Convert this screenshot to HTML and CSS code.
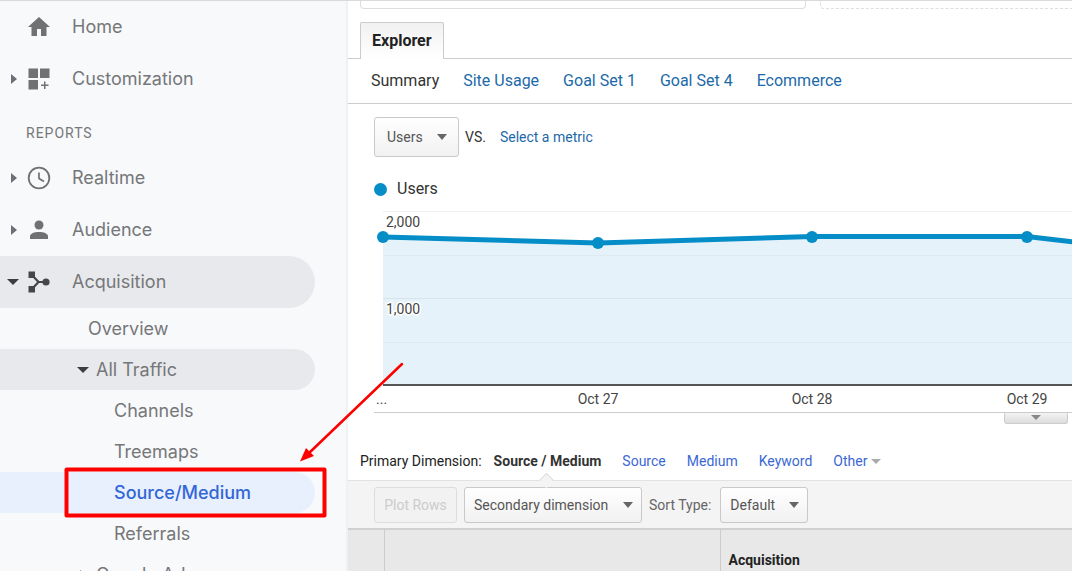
FILE: index.html
```
<!DOCTYPE html>
<html lang="en">
<head>
<meta charset="utf-8">
<title>Source/Medium - Analytics</title>
<link rel="stylesheet" href="styles.css">
</head>
<body>
<nav class="sidebar" aria-label="Reports">
  <a class="row" href="#"><span class="caret"></span>
    <svg class="icon" viewBox="0 0 24 24"><path d="M10 21v-7h4v7h5.500v-9H23L12 2 1 12h3.500v9z"/></svg>Home</a>
  <a class="row" href="#"><span class="caret caret-right"></span>
    <svg class="icon" viewBox="0 0 24 24"><path d="M1.500 1.500h9.500v9.500H1.500zM13 1.500h9.500v9.500H13zM1.500 13h9.500v9.500H1.500zM17 14.500h1.500v3h3V19h-3v3H17v-3h-3v-1.500h3z"/></svg>Customization</a>
  <h2 class="section">REPORTS</h2>
  <a class="row" href="#"><span class="caret caret-right"></span>
    <svg class="icon" viewBox="0 0 24 24"><circle cx="12" cy="12" r="10.300" fill="none" stroke="currentColor" stroke-width="1.800"/><path d="M12 6.500v6l5 3" fill="none" stroke="currentColor" stroke-width="1.700"/></svg>Realtime</a>
  <a class="row" href="#"><span class="caret caret-right"></span>
    <svg class="icon" viewBox="0 0 24 24"><circle cx="12" cy="7" r="4.500"/><path d="M3 21v-2.500c0-3.300 4.500-4.500 9-4.500s9 1.200 9 4.500V21z"/></svg>Audience</a>
  <a class="row row-open" href="#"><span class="caret caret-down"></span>
    <svg class="icon" viewBox="0 0 24 24"><path d="M4.500 4.500l7 7.500-7 7.500M11.500 12H19" fill="none" stroke="currentColor" stroke-width="2.200"/><path d="M1.500 1.500H8V8H1.500zM1.500 16H8v6.500H1.500z"/><circle cx="19" cy="12" r="3.600"/></svg>Acquisition</a>
  <a class="sub sub-overview" href="#">Overview</a>
  <a class="sub sub-group sub-open" href="#"><span class="caret-down"></span>All Traffic</a>
  <a class="sub sub-leaf" href="#">Channels</a>
  <a class="sub sub-leaf" href="#">Treemaps</a>
  <a class="sub sub-leaf sub-current" href="#" aria-current="page">Source/Medium</a>
  <a class="sub sub-leaf" href="#">Referrals</a>
  <a class="sub sub-group" href="#"><span class="caret-right"></span>Google Ads</a>
</nav>

<main class="main">
  <div class="segments"><div class="segment"></div><div class="segment segment-empty"></div></div>
  <div class="tabs"><button class="tab" type="button">Explorer</button></div>
  <div class="views">
    <span class="view-current">Summary</span>
    <a href="#">Site Usage</a>
    <a href="#">Goal Set 1</a>
    <a href="#">Goal Set 4</a>
    <a href="#">Ecommerce</a>
  </div>
  <div class="metrics">
    <span class="picker picker-metric"><select aria-label="Metric"><option>Users</option></select></span>
    <span class="versus">VS.</span>
    <a href="#">Select a metric</a>
  </div>
  <div class="legend"><span class="dot"></span>Users</div>
  <div class="chart">
    <svg width="760" height="201" viewBox="0 0 760 201" role="img" aria-label="Users per day">
      <path class="area" d="M9 26L224 32 438 25.500H653L760 38V174H9z"/>
      <path class="grid" d="M9 .500H760M9 87.500H760"/>
      <path class="grid grid-minor" d="M9 44.500H760M9 131.500H760"/>
      <path class="axis" d="M9 174H760"/>
      <path class="line" d="M9 26L224 32 438 25.500H653L760 38"/>
      <circle class="point" cx="9" cy="26" r="6"/><circle class="point" cx="224" cy="32" r="6"/>
      <circle class="point" cx="438" cy="26" r="6"/><circle class="point" cx="653" cy="26" r="6"/>
      <text class="scale" x="12" y="16">2,000</text>
      <text class="scale" x="12" y="103">1,000</text>
      <text x="2" y="193">...</text>
      <text class="day" x="224" y="193">Oct 27</text>
      <text class="day" x="438" y="193">Oct 28</text>
      <text class="day" x="653" y="193">Oct 29</text>
    </svg>
  </div>
  <div class="handle-bar"><button class="handle" type="button" aria-label="Expand chart"></button></div>
  <div class="dimensions">
    <span class="dim-label">Primary Dimension:</span>
    <strong class="dim-current">Source / Medium</strong>
    <a href="#">Source</a>
    <a href="#">Medium</a>
    <a href="#">Keyword</a>
    <a class="dim-other" href="#">Other</a>
  </div>
  <div class="toolbar">
    <button class="plot" type="button" disabled>Plot Rows</button>
    <span class="picker picker-secondary"><select aria-label="Secondary dimension"><option>Secondary dimension</option></select></span>
    <label class="sort" for="sort">Sort Type:</label>
    <span class="picker picker-sort"><select id="sort"><option>Default</option></select></span>
  </div>
  <table class="report">
    <thead><tr><th class="col-check"></th><th class="col-dim"></th><th>Acquisition</th></tr></thead>
  </table>
</main>

<svg class="annotation" width="420" height="530" viewBox="0 0 420 530" aria-hidden="true">
  <rect x="66.500" y="469.500" width="258" height="46" fill="none" stroke="#fe0000" stroke-width="4" stroke-linejoin="round"/>
  <path d="M402 364L308 454" stroke="#fe0000" stroke-width="2.500" stroke-linecap="round"/>
  <path d="M300 461.500L306 448 310 452 314 456z" fill="#fe0000"/>
</svg>
</body>
</html>
```
FILE: styles.css
```
* { box-sizing: border-box; }

body {
  margin: 0;
  height: 100vh;
  display: flex;
  position: relative;
  overflow: hidden;
  border-top: 1px solid #d9dade;
  background: #fff;
  color: #333;
  font: 14px/20px Roboto, sans-serif;
}

a { color: #1c69a8; text-decoration: none; }

/* Sidebar */
.sidebar {
  flex: none;
  width: 348px;
  background: #f8f9fb;
  border-right: 2px solid #f0f1f2;
  font: 400 18px/24px Inter, sans-serif;
}
.sidebar a { color: #757779; }
.row {
  display: flex;
  align-items: center;
  height: 52px;
  margin-right: 31px;
}
.row-open { background: #e8e9ec; border-radius: 0 26px 26px 0; }
.icon {
  width: 24px;
  height: 24px;
  margin-right: 21px;
  fill: currentColor;
  color: #707172;
}
.row-open .icon { color: #444649; }
.caret { width: 27px; flex: none; }
.caret-right::before, .caret-down::before {
  content: "";
  display: block;
  width: 0;
  border: 5px solid transparent;
}
.caret-right::before { border-left: 6px solid #6d6f76; border-right: 0; }
.caret-down::before {
  border-top: 6px solid #3c3d42;
  border-bottom: 0;
  border-left-width: 6px;
  border-right-width: 6px;
}
.caret-right { padding-left: 11px; }
.caret.caret-down { padding-left: 7px; }
.section {
  margin: 0;
  padding: 18px 0 0 26px;
  height: 47px;
  color: #757779;
  font: 14px/20px Roboto, sans-serif;
  letter-spacing: 1px;
}
.sub {
  display: flex;
  align-items: center;
  height: 41px;
  margin-right: 31px;
  border-radius: 0 21px 21px 0;
}
.sub-overview { padding-left: 88px; }
.sub-group { padding-left: 77px; gap: 7px; }
.sub-group .caret-right { width: 12px; padding-left: 3px; }
.sub-open { background: #e8e9ec; }
.sub-leaf { padding-left: 114px; }
.sidebar .sub-current { background: #e8f0fe; color: #3367d6; font-weight: 500; }

/* Report */
.main { flex: 1; min-width: 0; overflow: hidden; }
.segments { display: flex; gap: 14px; height: 8px; padding-left: 12px; }
.segment {
  width: 446px;
  border: 1px solid #dedede;
  border-top: 0;
  border-radius: 0 0 4px 4px;
}
.segment-empty { flex: 1; border-style: dashed; border-right: 0; border-radius: 0 0 0 4px; }
.tabs {
  display: flex;
  margin-top: 13px;
  padding-left: 12px;
  border-bottom: 1px solid #ccc;
}
.tab {
  height: 37px;
  margin-bottom: -1px;
  padding: 0 11px;
  border: 1px solid #ccc;
  border-bottom: 0;
  border-radius: 2px 2px 0 0;
  background: linear-gradient(#f1f1f1, #fff);
  color: #222;
  font: 700 16px/20px Roboto, sans-serif;
}
.views {
  display: flex;
  align-items: center;
  gap: 24px;
  height: 45px;
  padding-left: 23px;
  border-bottom: 1px solid #ccc;
  font-size: 16px;
}
.metrics { display: flex; align-items: center; margin-top: 13px; padding-left: 26px; }
.versus { margin: 0 14px 0 6px; font-size: 14px; }
.picker { position: relative; display: inline-flex; }
.picker select {
  appearance: none;
  width: 100%;
  margin: 0;
  padding: 0 12px;
  border: 1px solid #c9c9c9;
  border-radius: 3px;
  background: linear-gradient(#fff, #f1f1f1);
  color: #555;
  font: 14px/20px Roboto, sans-serif;
}
.picker::after {
  content: "";
  position: absolute;
  right: 12px;
  top: 50%;
  margin-top: -3px;
  border: 5px solid transparent;
  border-top: 6px solid #666;
  border-bottom: 0;
  pointer-events: none;
}
.picker-metric { width: 85px; }
.picker-metric select { height: 40px; }
.legend {
  display: flex;
  align-items: center;
  gap: 10px;
  margin-top: 22px;
  padding-left: 26px;
  font-size: 16px;
}
.dot { width: 13px; height: 13px; border-radius: 50%; background: #058dc7; }

.chart { margin: 12px 0 0 26px; overflow: hidden; border-bottom: 1px solid #ccc; }
.chart svg { display: block; }
.chart text { fill: #444; font: 14px Roboto, sans-serif; }
.chart .scale { stroke: #fff; stroke-width: 3px; stroke-linejoin: round; paint-order: stroke; }
.chart .day { text-anchor: middle; }
.area { fill: #e5f2f9; }
.grid { stroke: #000; stroke-opacity: .06; }
.grid-minor { stroke-opacity: .03; }
.axis { stroke: #555; stroke-width: 2px; }
.line { fill: none; stroke: #058dc7; stroke-width: 5px; }
.point { fill: #058dc7; }
.handle-bar { display: flex; justify-content: flex-end; padding-right: 4px; }
.handle {
  display: flex;
  justify-content: center;
  width: 64px;
  height: 11px;
  padding: 2px 0 0;
  border: 1px solid #ccc;
  border-top: 0;
  border-radius: 0 0 3px 3px;
  background: linear-gradient(#f3f3f3, #ddd);
}
.handle::before { content: ""; border: 5px solid transparent; border-top-color: #888; border-bottom: 0; }

.dimensions {
  display: flex;
  align-items: center;
  height: 38px;
  margin-top: 18px;
  padding-left: 12px;
  font-size: 14px;
}
.dimensions a { color: #3b67d6; margin-left: 21px; }
.dim-label { margin-right: 12px; color: #222; }
.dim-current { position: relative; }
.dim-current::after {
  content: "";
  position: absolute;
  z-index: 1;
  left: 50%;
  bottom: -15px;
  width: 10px;
  height: 10px;
  margin-left: -6px;
  border: 1px solid #ddd;
  border-right: 0;
  border-bottom: 0;
  background: #f4f4f4;
  transform: rotate(45deg);
}
.dim-other { display: flex; align-items: center; gap: 4px; }
.dim-other::after { content: ""; border: 5px solid transparent; border-top-color: #aaa; border-bottom: 0; }
.toolbar {
  display: flex;
  align-items: center;
  height: 48px;
  padding-left: 26px;
  border-top: 1px solid #e2e2e2;
  background: #f4f4f4;
}
.plot {
  width: 83px;
  height: 36px;
  margin-right: 7px;
  padding: 0;
  border: 1px solid #ddd;
  border-radius: 3px;
  background: #f2f2f2;
  color: #ccc;
  font: 14px/20px Roboto, sans-serif;
}
.picker-secondary { width: 178px; }
.picker-sort { width: 88px; }
.toolbar .picker select { height: 36px; padding: 0 9px; }
.toolbar .picker::after { right: 9px; }
.sort { margin: 0 9px 0 7px; color: #666; }
.report {
  width: 100%;
  border-collapse: collapse;
  table-layout: fixed;
  border-top: 2px solid #d0d0d0;
  background: #e8e8e8;
}
.report th { height: 58px; padding: 2px 8px 0; text-align: left; color: #222; font-weight: 700; }
.report .col-check { width: 36px; }
.report .col-dim { width: 336px; }
.report .col-check, .report .col-dim { border-right: 1px solid #ccc; }

/* Callout drawn over the page */
.annotation { position: absolute; left: 0; top: -1px; pointer-events: none; }
```
